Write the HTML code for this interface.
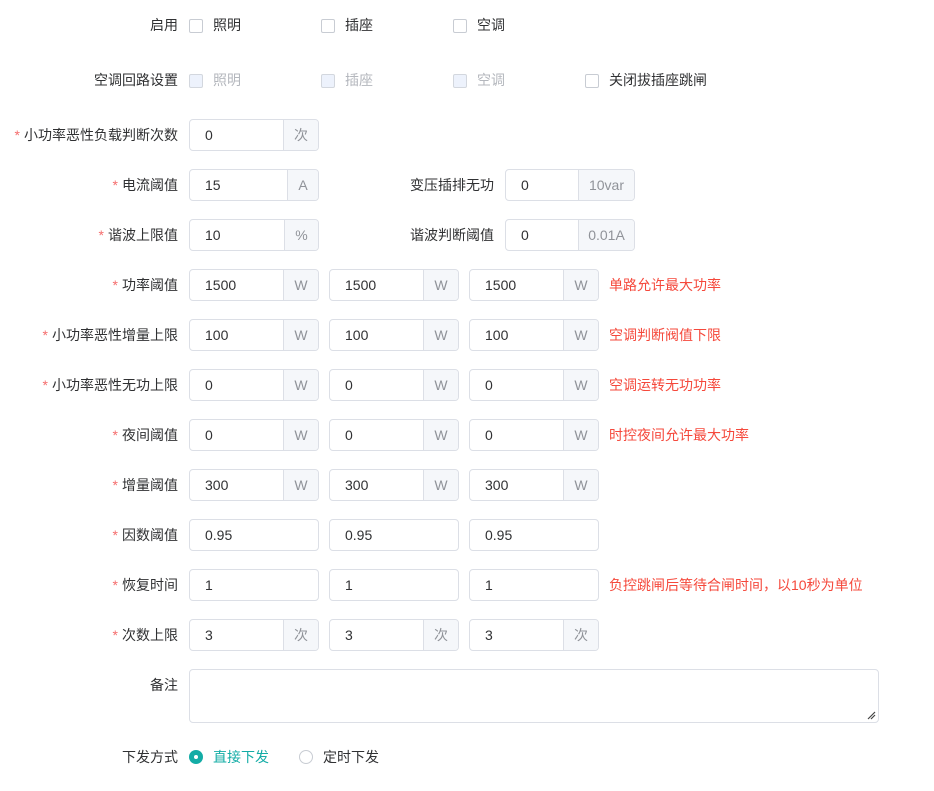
<!DOCTYPE html>
<html><head><meta charset="utf-8"><style>
*{box-sizing:border-box;margin:0;padding:0}
body{width:934px;height:791px;background:#fff;font-family:"Liberation Sans","Noto Sans CJK SC",sans-serif;font-size:14px;color:#303133;position:relative;overflow:hidden}
.a{position:absolute;white-space:nowrap}
.lb{position:absolute;right:756px;white-space:nowrap;line-height:20px}
.lb .s{color:#f56c6c;margin-right:4px}
.in{position:absolute;height:32px;border:1px solid #dcdfe6;border-radius:4px;background:#fff;overflow:hidden;line-height:30px}
.in .v{position:absolute;left:15px;top:0}
.in .ap{position:absolute;right:0;top:0;bottom:0;background:#f5f7fa;border-left:1px solid #dcdfe6;color:#909399;text-align:center}
.cb{position:absolute;width:14px;height:14px;border:1px solid #c8ccd3;border-radius:2px;background:#fff}
.cb.d{background:#edf2fc;border-color:#d3d7de}
.t{position:absolute;line-height:20px;white-space:nowrap}
.g{color:#b4b7bd}
.r{color:#f5483b}
</style></head><body>
<div class="lb" style="top:15px">启用</div>
<div class="cb" style="left:189px;top:19px"></div><div class="t" style="left:213px;top:15px">照明</div>
<div class="cb" style="left:321px;top:19px"></div><div class="t" style="left:345px;top:15px">插座</div>
<div class="cb" style="left:453px;top:19px"></div><div class="t" style="left:477px;top:15px">空调</div>

<div class="lb" style="top:70px">空调回路设置</div>
<div class="cb d" style="left:189px;top:74px"></div><div class="t g" style="left:213px;top:70px">照明</div>
<div class="cb d" style="left:321px;top:74px"></div><div class="t g" style="left:345px;top:70px">插座</div>
<div class="cb d" style="left:453px;top:74px"></div><div class="t g" style="left:477px;top:70px">空调</div>
<div class="cb" style="left:585px;top:74px"></div><div class="t" style="left:609px;top:70px">关闭拔插座跳闸</div>

<div class="lb" style="top:125px"><span class="s">*</span>小功率恶性负载判断次数</div>
<div class="in" style="left:189px;top:119px;width:130px"><span class="v">0</span><span class="ap" style="width:35px">次</span></div>

<div class="lb" style="top:175px"><span class="s">*</span>电流阈值</div>
<div class="in" style="left:189px;top:169px;width:130px"><span class="v">15</span><span class="ap" style="width:31px">A</span></div>
<div class="t" style="right:440px;top:175px">变压插排无功</div>
<div class="in" style="left:505px;top:169px;width:130px"><span class="v">0</span><span class="ap" style="width:56px">10var</span></div>

<div class="lb" style="top:225px"><span class="s">*</span>谐波上限值</div>
<div class="in" style="left:189px;top:219px;width:130px"><span class="v">10</span><span class="ap" style="width:34px">%</span></div>
<div class="t" style="right:440px;top:225px">谐波判断阈值</div>
<div class="in" style="left:505px;top:219px;width:130px"><span class="v">0</span><span class="ap" style="width:56px">0.01A</span></div>

<div class="lb" style="top:275px"><span class="s">*</span>功率阈值</div>
<div class="in" style="left:189px;top:269px;width:130px"><span class="v">1500</span><span class="ap" style="width:35px">W</span></div>
<div class="in" style="left:329px;top:269px;width:130px"><span class="v">1500</span><span class="ap" style="width:35px">W</span></div>
<div class="in" style="left:469px;top:269px;width:130px"><span class="v">1500</span><span class="ap" style="width:35px">W</span></div>
<div class="t r" style="left:609px;top:275px">单路允许最大功率</div>

<div class="lb" style="top:325px"><span class="s">*</span>小功率恶性增量上限</div>
<div class="in" style="left:189px;top:319px;width:130px"><span class="v">100</span><span class="ap" style="width:35px">W</span></div>
<div class="in" style="left:329px;top:319px;width:130px"><span class="v">100</span><span class="ap" style="width:35px">W</span></div>
<div class="in" style="left:469px;top:319px;width:130px"><span class="v">100</span><span class="ap" style="width:35px">W</span></div>
<div class="t r" style="left:609px;top:325px">空调判断阀值下限</div>

<div class="lb" style="top:375px"><span class="s">*</span>小功率恶性无功上限</div>
<div class="in" style="left:189px;top:369px;width:130px"><span class="v">0</span><span class="ap" style="width:35px">W</span></div>
<div class="in" style="left:329px;top:369px;width:130px"><span class="v">0</span><span class="ap" style="width:35px">W</span></div>
<div class="in" style="left:469px;top:369px;width:130px"><span class="v">0</span><span class="ap" style="width:35px">W</span></div>
<div class="t r" style="left:609px;top:375px">空调运转无功功率</div>

<div class="lb" style="top:425px"><span class="s">*</span>夜间阈值</div>
<div class="in" style="left:189px;top:419px;width:130px"><span class="v">0</span><span class="ap" style="width:35px">W</span></div>
<div class="in" style="left:329px;top:419px;width:130px"><span class="v">0</span><span class="ap" style="width:35px">W</span></div>
<div class="in" style="left:469px;top:419px;width:130px"><span class="v">0</span><span class="ap" style="width:35px">W</span></div>
<div class="t r" style="left:609px;top:425px">时控夜间允许最大功率</div>

<div class="lb" style="top:475px"><span class="s">*</span>增量阈值</div>
<div class="in" style="left:189px;top:469px;width:130px"><span class="v">300</span><span class="ap" style="width:35px">W</span></div>
<div class="in" style="left:329px;top:469px;width:130px"><span class="v">300</span><span class="ap" style="width:35px">W</span></div>
<div class="in" style="left:469px;top:469px;width:130px"><span class="v">300</span><span class="ap" style="width:35px">W</span></div>

<div class="lb" style="top:525px"><span class="s">*</span>因数阈值</div>
<div class="in" style="left:189px;top:519px;width:130px"><span class="v">0.95</span></div>
<div class="in" style="left:329px;top:519px;width:130px"><span class="v">0.95</span></div>
<div class="in" style="left:469px;top:519px;width:130px"><span class="v">0.95</span></div>

<div class="lb" style="top:575px"><span class="s">*</span>恢复时间</div>
<div class="in" style="left:189px;top:569px;width:130px"><span class="v">1</span></div>
<div class="in" style="left:329px;top:569px;width:130px"><span class="v">1</span></div>
<div class="in" style="left:469px;top:569px;width:130px"><span class="v">1</span></div>
<div class="t r" style="left:609px;top:575px">负控跳闸后等待合闸时间，以10秒为单位</div>

<div class="lb" style="top:625px"><span class="s">*</span>次数上限</div>
<div class="in" style="left:189px;top:619px;width:130px"><span class="v">3</span><span class="ap" style="width:35px">次</span></div>
<div class="in" style="left:329px;top:619px;width:130px"><span class="v">3</span><span class="ap" style="width:35px">次</span></div>
<div class="in" style="left:469px;top:619px;width:130px"><span class="v">3</span><span class="ap" style="width:35px">次</span></div>

<div class="lb" style="top:675px">备注</div>
<div class="in" style="left:189px;top:669px;width:690px;height:54px">
<svg style="position:absolute;right:2px;bottom:2px" width="9" height="9"><path d="M1 8L8 1M4 8L8 4" stroke="#444" stroke-width="1.2"/></svg></div>

<div class="lb" style="top:747px">下发方式</div>
<div class="a" style="left:189px;top:750px;width:14px;height:14px;border-radius:50%;background:#13aca6"><div style="position:absolute;left:5px;top:5px;width:4px;height:4px;border-radius:50%;background:#fff"></div></div>
<div class="t" style="left:213px;top:747px;color:#13aca6">直接下发</div>
<div class="a" style="left:299px;top:750px;width:14px;height:14px;border-radius:50%;border:1px solid #c8ccd3"></div>
<div class="t" style="left:323px;top:747px">定时下发</div>
</body></html>
